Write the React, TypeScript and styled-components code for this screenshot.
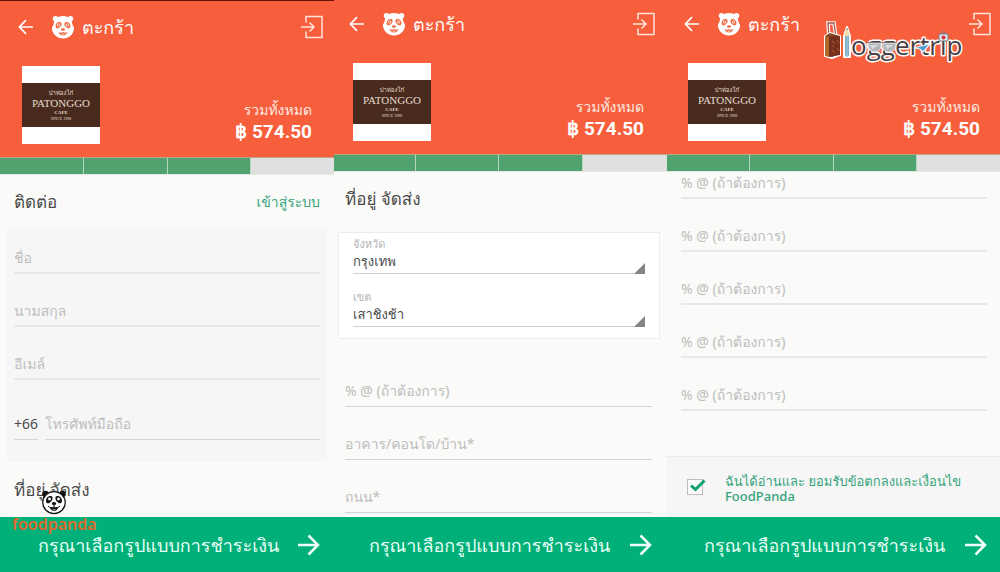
import React from "react";
import styled, { createGlobalStyle } from "styled-components";

const GlobalStyle = createGlobalStyle`
  *, *::before, *::after { box-sizing: border-box; }
  body {
    margin: 0;
    background: #fafaf8;
    font-family: "Noto Sans", Loma, Waree, sans-serif;
    color: #4a4a4a;
  }
  input, select, button { font-family: inherit; margin: 0; }
`;

type Inset = { $left: number; $right: number };

const Page = styled.div`
  position: relative;
  display: grid;
  grid-template-columns: 334fr 333fr 333fr;
  min-height: 100vh;
`;

const Screen = styled.section`
  display: flex;
  flex-direction: column;
  min-width: 0;
`;

const Header = styled.header<Inset & { $status?: boolean }>`
  background: #f65e3c;
  color: #fff;
  border-top: ${(p) => (p.$status ? "1px solid #6b1208" : "none")};
  padding: ${(p) => (p.$status ? 14 : 12)}px ${(p) => p.$right}px 13px ${(p) => p.$left}px;
`;

const TopBar = styled.div`
  display: flex;
  align-items: center;
  height: 24px;
  margin-bottom: 27px;
`;

const IconButton = styled.button`
  display: flex;
  padding: 0;
  border: 0;
  background: none;
  color: inherit;
`;

const PandaSlot = styled.span`
  display: flex;
  margin: 0 7px 0 17px;
`;

const Title = styled.h1`
  flex: 1;
  margin: 0;
  font-size: 18px;
  line-height: 24px;
  font-weight: 400;
`;

const Summary = styled.div`
  display: flex;
  justify-content: space-between;
  align-items: flex-end;
  padding: 0 11px 0 4px;
`;

const VendorLogo = styled.div`
  width: 78px;
  height: 78px;
  padding: 17px 0;
  background: #fff;
`;

const VendorBand = styled.div`
  display: flex;
  flex-direction: column;
  align-items: center;
  height: 44px;
  padding-top: 6px;
  background: #482b1e;
  color: #e6dccf;
  font-family: "Liberation Serif", Loma, Waree, serif;
  white-space: nowrap;
`;

const VendorThai = styled.span`
  font-size: 6px;
  line-height: 8px;
`;

const VendorName = styled.span`
  font-size: 11px;
  line-height: 12px;
`;

const VendorKind = styled.span`
  font-size: 5px;
  line-height: 7px;
  font-weight: 700;
`;

const VendorSince = styled.span`
  font-size: 4px;
  line-height: 5px;
`;

const Total = styled.div`
  text-align: right;
  padding-bottom: 1px;
`;

const TotalLabel = styled.div`
  font-size: 14px;
  line-height: 22px;
  color: #ffe9e2;
`;

const TotalValue = styled.div`
  font-family: Roboto, "Noto Sans", sans-serif;
  font-size: 19px;
  line-height: 22px;
  font-weight: 700;
`;

const Steps = styled.div<{ $first: number }>`
  display: grid;
  grid-template-columns: ${(p) => p.$first}fr 83fr 83fr 83fr;
  height: 18px;
  border-top: 1px solid #b9a58b;
  border-bottom: 1px solid #e4e9e4;
`;

const Step = styled.span<{ $done: boolean }>`
  background: ${(p) => (p.$done ? "#50a36e" : "#e0e0e0")};
  border-right: 1px solid ${(p) => (p.$done ? "#b5d8c1" : "#e0e0e0")};
`;

const Body = styled.main`
  flex: 1;
  background: #fafaf8;
`;

const HeadingRow = styled.div<Inset & { $height: number }>`
  display: flex;
  justify-content: space-between;
  align-items: center;
  height: ${(p) => p.$height}px;
  padding: 0 ${(p) => p.$right}px 0 ${(p) => p.$left}px;
`;

const Heading = styled.h2`
  margin: 0;
  font-size: 17px;
  line-height: 24px;
  font-weight: 400;
`;

const LoginLink = styled.a`
  font-size: 14px;
  line-height: 24px;
  font-weight: 500;
  color: #35a47a;
  text-decoration: none;
`;

const ContactCard = styled.div`
  margin: 0 7px;
  padding: 19px 7px 22px;
  background: #f6f6f6;
`;

const FieldList = styled.div<Inset & { $top: number }>`
  padding: ${(p) => p.$top}px ${(p) => p.$right}px 0 ${(p) => p.$left}px;
`;

const TextField = styled.input<{ $soft?: boolean }>`
  display: block;
  width: 100%;
  height: 27px;
  padding: 0 0 5px;
  border: 0;
  border-bottom: ${(p) => (p.$soft ? "2px solid #e8e8e8" : "1px solid #d4d4d4")};
  border-radius: 0;
  background: none;
  outline: 0;
  font-size: 14px;
  line-height: 20px;
  color: #4a4a4a;
  &::placeholder { color: #bdbdbd; opacity: 1; }
  & + & { margin-top: 26px; }
`;

const PhoneRow = styled.div`
  display: grid;
  grid-template-columns: 24px 1fr;
  gap: 7px;
  margin-top: 33px;
`;

const RegionCard = styled.div`
  margin: 6px 7px 0 4px;
  padding: 4px 14px 11px;
  border: 1px solid #ececea;
  background: #fff;
`;

const SelectField = styled.label`
  position: relative;
  display: block;
  height: 37px;
  & + & { margin-top: 16px; }
  &::after {
    content: "";
    position: absolute;
    right: 0;
    bottom: 0;
    border-left: 11px solid transparent;
    border-bottom: 11px solid #858585;
    pointer-events: none;
  }
`;

const SelectLabel = styled.span`
  display: block;
  font-size: 11px;
  line-height: 14px;
  color: #b4b4b4;
`;

const Select = styled.select`
  appearance: none;
  display: block;
  width: 100%;
  height: 23px;
  padding: 0 0 2px;
  border: 0;
  border-bottom: 1px solid #cfcfcf;
  border-radius: 0;
  background: none;
  font-size: 13px;
  line-height: 20px;
  color: #4a4a4a;
`;

const Terms = styled.label`
  display: flex;
  align-items: center;
  height: 61px;
  padding: 0 20px;
  border-top: 1px solid #ececec;
  background: #f6f6f6;
  font-size: 13px;
  line-height: 15px;
  font-weight: 500;
  color: #35a47a;
`;

const TermsText = styled.span`
  padding-top: 3px;
`;

const TickBox = styled.span`
  position: relative;
  display: flex;
  margin-right: 22px;
  svg { position: absolute; left: 3px; top: 0; pointer-events: none; }
`;

const Tick = styled.input`
  appearance: none;
  width: 16px;
  height: 16px;
  border: 1px solid #bdbdbd;
  background: #fafafa;
`;

const PayButton = styled.button<Inset>`
  display: flex;
  align-items: center;
  justify-content: space-between;
  height: 55px;
  padding: 0 ${(p) => p.$right}px 0 ${(p) => p.$left}px;
  border: 0;
  background: #00b078;
  color: #e9fff6;
  font-size: 18px;
  line-height: 28px;
  white-space: nowrap;
`;

const PandaMark = styled.div`
  position: absolute;
  left: 12px;
  top: 489px;
  display: flex;
  flex-direction: column;
  align-items: center;
  color: #e0682f;
  font-size: 16px;
  line-height: 18px;
  font-weight: 600;
  pointer-events: none;
`;

const TripMark = styled.div`
  position: absolute;
  right: 32px;
  top: 14px;
  display: flex;
  pointer-events: none;
`;

const BackIcon = () => (
  <svg width="16" height="16" viewBox="0 0 16 16" fill="none" stroke="currentColor" strokeWidth="1.7">
    <path d="M15 8H1.500M8 1.200 1.400 8 8 14.800" />
  </svg>
);

const EnterIcon = () => (
  <svg width="23" height="24" viewBox="0 0 23 24" fill="none" stroke="#ffe3da" strokeWidth="1.500">
    <path d="M6 7.500V1.500H22V22.500H6V16.500M1 12H13.500M9.500 7.500 14 12 9.500 16.500" />
  </svg>
);

const PandaWhite = () => (
  <svg width="24" height="24" viewBox="0 0 48 48">
    <g fill="#fff">
      <circle cx="9" cy="7.500" r="5.500" />
      <circle cx="39" cy="7.500" r="5.500" />
      <path d="M24 2C35 2 42 8 43 20C44 22 47 25 46 28C45 39 35 47 24 47S3 39 2 28C1 25 4 22 5 20C6 8 13 2 24 2Z" />
    </g>
    <g fill="#f0693f">
      <path d="M20 15c-5-3-11 1-11 7c0 5 5 6 8 3c4-3 6-7 3-10ZM28 15c5-3 11 1 11 7c0 5-5 6-8 3c-4-3-6-7-3-10Z" />
      <ellipse cx="24" cy="29" rx="4" ry="2.500" />
      <path d="M15 34c3 2 6 2 9 0c3 2 6 2 9 0c-1 4-5 7-9 7s-8-3-9-7Z" />
    </g>
    <path d="M20 37.500h8l-4 2Z" fill="#fff" />
    <g fill="none" stroke="#fff" strokeWidth="1.500">
      <circle cx="15" cy="20" r="2.500" />
      <circle cx="33" cy="20" r="2.500" />
    </g>
  </svg>
);

const PandaBlack = () => (
  <svg width="26" height="26" viewBox="0 0 52 52">
    <circle cx="9" cy="10" r="6.500" fill="#111" />
    <circle cx="43" cy="10" r="6.500" fill="#111" />
    <ellipse cx="26" cy="27" rx="22.500" ry="22" fill="#fff" stroke="#111" strokeWidth="2.500" />
    <path d="M22 15c-6-3-12 2-12 9c0 5 5 6 8 3c4-3 7-9 4-12ZM30 15c6-3 12 2 12 9c0 5-5 6-8 3c-4-3-7-9-4-12Z" fill="#111" />
    <circle cx="17" cy="20" r="2.800" fill="#fff" />
    <circle cx="35" cy="20" r="2.800" fill="#fff" />
    <ellipse cx="26" cy="29" rx="4.500" ry="3" fill="#111" />
    <path d="M26 31v5M14 34c3 4 8 4 12 2c4 2 9 2 12-2" fill="none" stroke="#111" strokeWidth="2" />
    <path d="M18 38c3 8 13 8 16 0l-8-1Z" fill="#111" />
    <path d="M22 41h8l-4 2Z" fill="#fff" />
  </svg>
);

const ForwardIcon = () => (
  <svg width="22" height="22" viewBox="0 0 22 22" fill="none" stroke="#f4fffb" strokeWidth="2.500">
    <path d="M0 11H20M10.500 1.500 20 11 10.500 20.500" />
  </svg>
);

const TickIcon = () => (
  <svg width="16" height="13" viewBox="0 0 16 13" fill="none" stroke="#10a070" strokeWidth="3">
    <path d="M1 6.500 5.500 10.500 14.500 1.500" />
  </svg>
);

const TripLogo = () => (
  <svg width="146" height="52" viewBox="0 0 146 52">
    <path d="M7 23 6 9h6l2 14" fill="none" stroke="#fff" strokeWidth="3.500" />
    <path d="M7 23 6 9h6l2 14" fill="none" stroke="#a4564a" strokeWidth="1.300" />
    <path d="M3 22 8 19 18 22V41L10 44 3 42Z" fill="#6a2f15" stroke="#fff" strokeWidth="2" strokeLinejoin="round" />
    <path d="M3 22 7 23V43L3 42Z" fill="#b26a2c" />
    <path d="M3 22 8 19 18 22 7 23Z" fill="#8a4a2c" />
    <path d="M7 23 18 22V41L7 43Z" fill="#74301d" />
    <path d="M10 27l3 3M15 26l2 3M10 36l3 3M15 34l2 3M10 32l2 1" stroke="#a4502f" strokeWidth="1.200" />
    <path d="M22 43V22l3-9 3 9V43Z" fill="#7fa9c6" stroke="#fff" strokeWidth="2" strokeLinejoin="round" />
    <path d="M22 22l3-9 3 9Z" fill="#f7dca5" />
    <path d="M24.500 16l.5-2 .8 2Z" fill="#3e536b" />
    <path d="M25 22V43" stroke="#9cc1d9" strokeWidth="1.500" />
    <text
      x="29"
      y="41"
      fontFamily="Open Sans, Noto Sans, sans-serif"
      fontSize="26"
      fontWeight="500"
      fill="#4b3f44"
      stroke="#fff"
      strokeWidth="3"
      strokeLinejoin="round"
      paintOrder="stroke"
    >
      oggertrip
    </text>
    <path d="M46 29h13c1 6-2 9-6 9s-7-3-7-9ZM61 29h13c0 6-3 9-7 9s-7-3-6-9Z" fill="#b3b6b8" stroke="#e8e8e8" strokeWidth="1" />
    <path d="M45 28.500H75" stroke="#77777b" strokeWidth="1" />
    <path d="M48 31h9l-7 4ZM63 31h9l-7 4Z" fill="#d8dadb" />
    <path d="M92 34 99 32 108 30 101 38 98 35Z" fill="#4c9bd0" stroke="#e9f6ff" strokeWidth="1.200" />
    <rect x="117" y="20" width="9" height="7" rx="1" fill="#dfe6ee" stroke="#78808c" strokeWidth="1" />
    <path d="M119 20c0-3 5-3 5 0" fill="none" stroke="#78808c" />
    <circle cx="121.500" cy="23.500" r="2" fill="#d9343e" />
  </svg>
);

type HeadProps = { left: number; right: number; first: number; status?: boolean };

function OrderHead({ left, right, first, status }: HeadProps) {
  return (
    <>
      <Header $left={left} $right={right} $status={status}>
        <TopBar>
          <IconButton type="button" aria-label="กลับ"><BackIcon /></IconButton>
          <PandaSlot><PandaWhite /></PandaSlot>
          <Title>ตะกร้า</Title>
          <IconButton type="button" aria-label="เข้าสู่ระบบ"><EnterIcon /></IconButton>
        </TopBar>
        <Summary>
          <VendorLogo>
            <VendorBand>
              <VendorThai>ปาท่องโก๋</VendorThai>
              <VendorName>PATONGGO</VendorName>
              <VendorKind>CAFE</VendorKind>
              <VendorSince>SINCE 1988</VendorSince>
            </VendorBand>
          </VendorLogo>
          <Total>
            <TotalLabel>รวมทั้งหมด</TotalLabel>
            <TotalValue>฿ 574.50</TotalValue>
          </Total>
        </Summary>
      </Header>
      <Steps $first={first}>
        {[true, true, true, false].map((done, i) => <Step key={i} $done={done} />)}
      </Steps>
    </>
  );
}

function Pay({ left, right }: { left: number; right: number }) {
  return (
    <PayButton type="button" $left={left} $right={right}>
      กรุณาเลือกรูปแบบการชำระเงิน
      <ForwardIcon />
    </PayButton>
  );
}

const optional = "% @ (ถ้าต้องการ)";

export default function App() {
  return (
    <Page>
      <GlobalStyle />
      <Screen>
        <OrderHead left={18} right={11} first={84} status />
        <Body>
          <HeadingRow $left={14} $right={14} $height={53}>
            <Heading>ติดต่อ</Heading>
            <LoginLink href="#login">เข้าสู่ระบบ</LoginLink>
          </HeadingRow>
          <ContactCard>
            <TextField $soft aria-label="ชื่อ" placeholder="ชื่อ" />
            <TextField $soft aria-label="นามสกุล" placeholder="นามสกุล" />
            <TextField $soft aria-label="อีเมล์" placeholder="อีเมล์" />
            <PhoneRow>
              <div><TextField aria-label="รหัสประเทศ" defaultValue="+66" /></div>
              <div><TextField aria-label="โทรศัพท์มือถือ" placeholder="โทรศัพท์มือถือ" /></div>
            </PhoneRow>
          </ContactCard>
          <HeadingRow $left={14} $right={14} $height={55}>
            <Heading>ที่อยู่ จัดส่ง</Heading>
          </HeadingRow>
        </Body>
        <Pay left={38} right={14} />
      </Screen>

      <Screen>
        <OrderHead left={15} right={12} first={81} />
        <Body>
          <HeadingRow $left={11} $right={15} $height={54}>
            <Heading>ที่อยู่ จัดส่ง</Heading>
          </HeadingRow>
          <RegionCard>
            <SelectField>
              <SelectLabel>จังหวัด</SelectLabel>
              <Select defaultValue="bkk"><option value="bkk">กรุงเทพ</option></Select>
            </SelectField>
            <SelectField>
              <SelectLabel>เขต</SelectLabel>
              <Select defaultValue="sao"><option value="sao">เสาชิงช้า</option></Select>
            </SelectField>
          </RegionCard>
          <FieldList $left={11} $right={15} $top={41}>
            <TextField aria-label="รายละเอียด" placeholder={optional} />
            <TextField aria-label="อาคาร" placeholder="อาคาร/คอนโด/บ้าน*" />
            <TextField aria-label="ถนน" placeholder="ถนน*" />
          </FieldList>
        </Body>
        <Pay left={35} right={15} />
      </Screen>

      <Screen>
        <OrderHead left={17} right={9} first={83} />
        <Body>
          <FieldList $left={14} $right={13} $top={0}>
            {[1, 2, 3, 4, 5].map((n) => (
              <TextField key={n} $soft aria-label={`รายละเอียด ${n}`} placeholder={optional} />
            ))}
          </FieldList>
        </Body>
        <Terms>
          <TickBox>
            <Tick type="checkbox" defaultChecked />
            <TickIcon />
          </TickBox>
          <TermsText>ฉันได้อ่านและ ยอมรับข้อตกลงและเงื่อนไข FoodPanda</TermsText>
        </Terms>
        <Pay left={37} right={13} />
      </Screen>

      <PandaMark>
        <PandaBlack />
        foodpanda
      </PandaMark>
      <TripMark><TripLogo /></TripMark>
    </Page>
  );
}
